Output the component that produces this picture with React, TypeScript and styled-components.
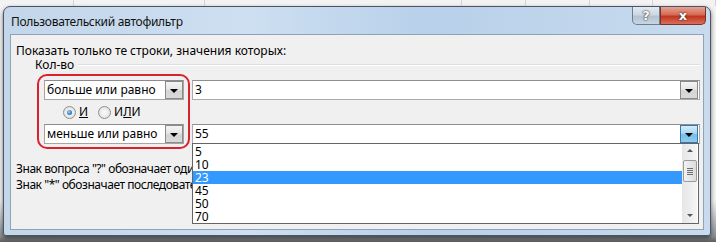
import React from 'react';
import styled, { createGlobalStyle } from 'styled-components';

const GlobalStyle = createGlobalStyle`
  html, body {
    margin: 0;
    padding: 0;
    width: 716px;
    height: 242px;
    overflow: hidden;
    background: #6f7378;
    font-family: "Noto Sans", "Liberation Sans", sans-serif;
    font-size: 12px;
    color: #000;
  }
`;

const Page = styled.div`
  width: 716px;
  height: 242px;
  display: flex;
  flex-direction: column;
  background: linear-gradient(#f3f3f3 0, #f3f3f3 200px, #8b8f94 236px, #5a5d61 242px);
`;

const SheetStrip = styled.div`
  height: 6px;
  display: flex;
  flex-shrink: 0;
`;

const SheetCell = styled.div<{ w: number }>`
  width: ${p => p.w}px;
  height: 100%;
  border-right: 1px solid #d4d4d4;
  box-sizing: border-box;
`;

const Dialog = styled.div`
  margin-left: 3px;
  width: 708px;
  height: 230px;
  box-sizing: border-box;
  border: 1px solid #4b5563;
  border-radius: 7px 7px 3px 3px;
  background: linear-gradient(90deg, #c3d6ea 0%, #cddff1 35%, #b8d0ea 60%, #c8dbee 100%);
  box-shadow: 0 2px 4px rgba(0, 0, 0, 0.55);
  display: flex;
  flex-direction: column;
  padding: 0 6px 5px 6px;
`;

const TitleBar = styled.div`
  height: 27px;
  display: flex;
  align-items: flex-start;
  justify-content: space-between;
`;

const TitleText = styled.div`
  padding: 8px 0 0 1px;
  font-size: 12px;
  line-height: 14px;
  letter-spacing: -0.3px;
  color: #111;
`;

const CaptionButtons = styled.div`
  display: flex;
  margin-right: -2px;
`;

const CaptionButton = styled.div<{ danger?: boolean }>`
  height: 18px;
  width: ${p => (p.danger ? 46 : 28)}px;
  box-sizing: border-box;
  border: 1px solid ${p => (p.danger ? '#7a3128' : '#6f7e8f')};
  border-top: none;
  border-radius: ${p => (p.danger ? '0 0 5px 0' : '0 0 0 5px')};
  background: ${p =>
    p.danger
      ? 'linear-gradient(#e6a394 0%, #d66a55 45%, #c0351f 55%, #d9705a 100%)'
      : 'linear-gradient(#e2e9f1 0%, #cdd8e4 45%, #b4c2d1 55%, #c9d5e2 100%)'};
  display: flex;
  align-items: center;
  justify-content: center;
  color: #fff;
  font-family: "DejaVu Sans", sans-serif;
  font-weight: bold;
  font-size: 13px;
  text-shadow: 0 0 2px #333, 0 0 1px #222;
`;

const Client = styled.div`
  flex: 1;
  background: #f0f0f0;
  border: 1px solid #8ea2b8;
  display: flex;
  flex-direction: column;
`;

const Prompt = styled.div`
  margin: 9px 0 0 5px;
  line-height: 14px;
`;

const GroupHeader = styled.div`
  display: flex;
  align-items: center;
  margin: 0 3px 0 24px;
  height: 14px;
  line-height: 14px;
`;

const GroupLine = styled.div`
  flex: 1;
  height: 1px;
  margin-left: 4px;
  background: #d9dfe4;
  border-bottom: 1px solid #fff;
`;

const FilterRow = styled.div`
  display: flex;
  margin: 2px 0 0 26px;
  height: 75px;
`;

const Highlight = styled.div`
  width: 153px;
  box-sizing: border-box;
  border: 2px solid #d8232f;
  border-radius: 10px;
  padding: 4px 0 0 5px;
  display: flex;
  flex-direction: column;
`;

const Combo = styled.div`
  width: 140px;
  height: 20px;
  box-sizing: border-box;
  border: 1px solid #a5a5a5;
  border-top-color: #8c8c8c;
  background: #fff;
  display: flex;
  align-items: center;
`;

const ComboText = styled.div`
  flex: 1;
  padding-left: 2px;
  line-height: 14px;
  white-space: nowrap;
`;

const DropButton = styled.div<{ active?: boolean }>`
  width: 18px;
  height: 18px;
  box-sizing: border-box;
  border: 1px solid ${p => (p.active ? '#3a77a8' : '#8a8a8a')};
  background: ${p =>
    p.active
      ? 'linear-gradient(#d6ecfb 0%, #a9d6f5 45%, #74bde9 55%, #93cdef 100%)'
      : 'linear-gradient(#f4f4f4 0%, #e6e6e6 45%, #d4d4d4 55%, #dadada 100%)'};
  display: flex;
  align-items: center;
  justify-content: center;
`;

const Arrow = styled.div`
  width: 0;
  height: 0;
  border-left: 4px solid transparent;
  border-right: 4px solid transparent;
  border-top: 4px solid #000;
  margin-top: 1px;
`;

const RadioRow = styled.div`
  height: 24px;
  display: flex;
  align-items: center;
  padding-left: 19px;
  gap: 10px;
`;

const RadioItem = styled.div`
  display: flex;
  align-items: center;
  gap: 3px;
  line-height: 14px;
`;

const RadioCircle = styled.div<{ checked?: boolean }>`
  width: 11px;
  height: 11px;
  border-radius: 50%;
  border: 1px solid #8f8f8f;
  background: radial-gradient(circle, #ffffff 0%, #e2e2e2 70%, #cfcfcf 100%);
  display: flex;
  align-items: center;
  justify-content: center;

  &::after {
    content: '';
    display: ${p => (p.checked ? 'block' : 'none')};
    width: 5px;
    height: 5px;
    border-radius: 50%;
    background: radial-gradient(circle at 40% 40%, #9fd3f5 0%, #2a7fc2 60%, #195f9a 100%);
  }
`;

const Accel = styled.span`
  text-decoration: underline;
`;

const ValueColumn = styled.div`
  position: relative;
  margin-left: 2px;
  width: 508px;
  padding-top: 6px;
  display: flex;
  flex-direction: column;
  gap: 24px;
`;

const ValueBox = styled.div`
  height: 20px;
  box-sizing: border-box;
  border: 1px solid #ababab;
  border-top-color: #8e8e8e;
  background: #fff;
  display: flex;
  align-items: center;
  padding-right: 1px;
`;

const ValueText = styled.div`
  flex: 1;
  padding-left: 2px;
  line-height: 14px;
`;

const DropList = styled.div`
  position: absolute;
  left: 0;
  top: 69px;
  width: 507px;
  height: 81px;
  box-sizing: border-box;
  border: 1px solid #646464;
  background: #fff;
  display: flex;
  z-index: 2;
`;

const Items = styled.div`
  flex: 1;
  padding-top: 1px;
`;

const Item = styled.div<{ selected?: boolean }>`
  height: 13px;
  line-height: 13px;
  padding-left: 2px;
  background: ${p => (p.selected ? '#3399ff' : 'transparent')};
  color: ${p => (p.selected ? '#fff' : '#000')};
`;

const ScrollBar = styled.div`
  width: 15px;
  margin: 0 1px 0 0;
  background: linear-gradient(90deg, #e6e6e6, #f5f5f5);
  display: flex;
  flex-direction: column;
  align-items: center;
  padding-top: 5px;
  box-sizing: border-box;
`;

const ScrollArrow = styled.div<{ down?: boolean }>`
  width: 0;
  height: 0;
  border-left: 3px solid transparent;
  border-right: 3px solid transparent;
  ${p => (p.down ? 'border-top: 3px solid #555; margin-bottom: 6px;' : 'border-bottom: 3px solid #555;')}
`;

const Thumb = styled.div`
  margin-top: 8px;
  width: 14px;
  height: 22px;
  box-sizing: border-box;
  border: 1px solid #9a9a9a;
  border-radius: 2px;
  background: linear-gradient(90deg, #f2f2f2, #dcdcdc);
  display: flex;
  flex-direction: column;
  align-items: center;
  justify-content: center;
  gap: 1px;
`;

const Grip = styled.div`
  width: 6px;
  height: 1px;
  background: #6e6e6e;
`;

const ScrollSpacer = styled.div`
  flex: 1;
`;

/* the open list covers the right part of these lines, so they are cut at its edge */
const HelpText = styled.div`
  margin: 13px 0 0 5px;
  width: 176px;
  overflow: hidden;
  display: flex;
  flex-direction: column;
  gap: 2px;
  line-height: 14px;
  letter-spacing: -0.45px;
  white-space: nowrap;
`;

const sheetWidths = [74, 131, 257, 64, 64, 63, 63];
const values = ['5', '10', '23', '45', '50', '70'];

const App: React.FC = () => (
  <Page>
    <GlobalStyle />
    <SheetStrip>
      {sheetWidths.map((w, i) => (
        <SheetCell key={i} w={w} />
      ))}
    </SheetStrip>
    <Dialog>
      <TitleBar>
        <TitleText>Пользовательский автофильтр</TitleText>
        <CaptionButtons>
          <CaptionButton>?</CaptionButton>
          <CaptionButton danger>x</CaptionButton>
        </CaptionButtons>
      </TitleBar>
      <Client>
        <Prompt>Показать только те строки, значения которых:</Prompt>
        <GroupHeader>
          Кол-во
          <GroupLine />
        </GroupHeader>
        <FilterRow>
          <Highlight>
            <Combo>
              <ComboText>больше или равно</ComboText>
              <DropButton>
                <Arrow />
              </DropButton>
            </Combo>
            <RadioRow>
              <RadioItem>
                <RadioCircle checked />
                <Accel>И</Accel>
              </RadioItem>
              <RadioItem>
                <RadioCircle />
                <span>
                  И<Accel>Л</Accel>И
                </span>
              </RadioItem>
            </RadioRow>
            <Combo>
              <ComboText>меньше или равно</ComboText>
              <DropButton>
                <Arrow />
              </DropButton>
            </Combo>
          </Highlight>
          <ValueColumn>
            <ValueBox>
              <ValueText>3</ValueText>
              <DropButton>
                <Arrow />
              </DropButton>
            </ValueBox>
            <ValueBox>
              <ValueText>55</ValueText>
              <DropButton active>
                <Arrow />
              </DropButton>
            </ValueBox>
            <DropList>
              <Items>
                {values.map(v => (
                  <Item key={v} selected={v === '23'}>
                    {v}
                  </Item>
                ))}
              </Items>
              <ScrollBar>
                <ScrollArrow />
                <Thumb>
                  <Grip />
                  <Grip />
                  <Grip />
                  <Grip />
                </Thumb>
                <ScrollSpacer />
                <ScrollArrow down />
              </ScrollBar>
            </DropList>
          </ValueColumn>
        </FilterRow>
        <HelpText>
          <div>Знак вопроса "?" обозначает один любой знак</div>
          <div>Знак "*" обозначает последовательность любых знаков</div>
        </HelpText>
      </Client>
    </Dialog>
  </Page>
);

export default App;
